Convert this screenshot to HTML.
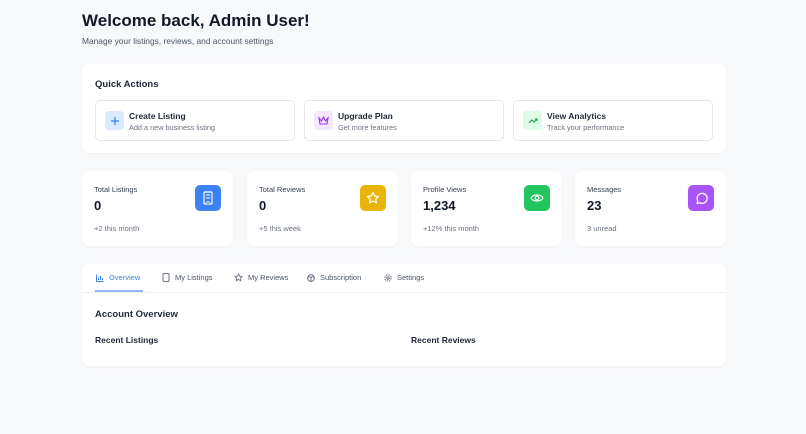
<!DOCTYPE html><html><head><style>
*{box-sizing:border-box;margin:0;padding:0}
body{width:806px;height:434px;background:#f8f9fb;font-family:"Liberation Sans",sans-serif;color:#111827;position:relative;overflow:hidden}
.a{position:absolute}
.card{position:absolute;background:#fff;border-radius:7px;box-shadow:0 1px 2px rgba(0,0,0,.04)}
.qa{position:absolute;top:36px;height:41px;width:200px;border:1px solid #e5e7eb;border-radius:5px;background:#fff}
.qa .ic{position:absolute;left:9px;top:10px;width:19px;height:19px;border-radius:4px;display:flex;align-items:center;justify-content:center}
.qa b{position:absolute;left:33px;top:10px;font-size:8.5px;font-weight:bold;color:#1f2937}
.qa span{position:absolute;left:33px;top:22px;font-size:7.3px;color:#6b7280}
.st{top:171px;width:151px;height:75px}
.st .l{position:absolute;left:12px;top:14px;font-size:7.5px;color:#374151}
.st .v{position:absolute;left:12px;top:27px;font-size:13px;font-weight:bold}
.st .s{position:absolute;left:12px;top:53px;font-size:7.5px;color:#6b7280}
.st .ic{position:absolute;left:113px;top:14px;width:26px;height:26px;border-radius:5px;display:flex;align-items:center;justify-content:center}
.tab{position:absolute;top:9px;font-size:7.5px;color:#4b5563;display:flex;align-items:center;gap:5px}
</style></head><body>
<div class="a" style="left:82px;top:11px;font-size:17px;font-weight:bold">Welcome back, Admin User!</div>
<div class="a" style="left:82px;top:36px;font-size:8.4px;color:#4b5563">Manage your listings, reviews, and account settings</div>
<div class="card" style="left:82px;top:64px;width:644px;height:89px">
<div class="a" style="left:13px;top:15px;font-size:9.5px;font-weight:bold;color:#1f2937">Quick Actions</div>
<div class="qa" style="left:13px"><div class="ic" style="background:#dbeafe"><svg width="10" height="10" viewBox="0 0 10 10"><path d="M5 1v8M1 5h8" stroke="#3b82f6" stroke-width="1.2"/></svg></div><b>Create Listing</b><span>Add a new business listing</span></div>
<div class="qa" style="left:222px"><div class="ic" style="background:#f3e8ff"><svg width="11" height="10" viewBox="0 0 11 10"><path d="M1 2l2.5 3L5.5 1l2 4L10 2 9 8H2z" stroke="#9333ea" fill="none" stroke-width="1.1"/></svg></div><b>Upgrade Plan</b><span>Get more features</span></div>
<div class="qa" style="left:431px"><div class="ic" style="background:#dcfce7"><svg width="10" height="10" viewBox="0 0 10 10"><path d="M1 7l3-3 2 2 3-3M7 3h2v2" stroke="#16a34a" fill="none" stroke-width="1.1"/></svg></div><b>View Analytics</b><span>Track your performance</span></div>
</div>
<div class="card st" style="left:82px"><div class="l">Total Listings</div><div class="v">0</div><div class="s">+2 this month</div><div class="ic" style="background:#3b82f6"><svg width="12" height="14" viewBox="0 0 12 14"><rect x="2" y="1" width="8" height="12" rx="1" stroke="#fff" fill="none" stroke-width="1.2"/><path d="M4 4h4M4 7h4M5 13v-2h2v2" stroke="#fff" stroke-width="1"/></svg></div></div>
<div class="card st" style="left:247px"><div class="l">Total Reviews</div><div class="v">0</div><div class="s">+5 this week</div><div class="ic" style="background:#eab308"><svg width="14" height="14" viewBox="0 0 14 14"><path d="M7 1.5l1.7 3.5 3.8.5-2.8 2.6.7 3.8L7 10.1 3.6 11.9l.7-3.8L1.5 5.5l3.8-.5z" stroke="#fff" fill="none" stroke-width="1.2" stroke-linejoin="round"/></svg></div></div>
<div class="card st" style="left:411px"><div class="l">Profile Views</div><div class="v">1,234</div><div class="s">+12% this month</div><div class="ic" style="background:#22c55e"><svg width="14" height="10" viewBox="0 0 14 10"><path d="M1 5c2-4 10-4 12 0-2 4-10 4-12 0z" stroke="#fff" fill="none" stroke-width="1.2"/><circle cx="7" cy="5" r="1.8" stroke="#fff" fill="none" stroke-width="1.2"/></svg></div></div>
<div class="card st" style="left:575px"><div class="l">Messages</div><div class="v">23</div><div class="s">3 unread</div><div class="ic" style="background:#a855f7"><svg width="13" height="13" viewBox="0 0 13 13"><path d="M2 11.5l.8-2.6A5 5 0 1 1 4.6 10.7z" stroke="#fff" fill="none" stroke-width="1.2" stroke-linejoin="round"/></svg></div></div>
<div class="card" style="left:82px;top:264px;width:644px;height:102px">
<div class="a" style="left:0;top:28px;width:644px;height:1px;background:#eef0f3"></div>
<div class="a" style="left:13px;top:26px;width:48px;height:2px;background:#93b4f5"></div>
<div class="tab" style="left:14px;color:#3b82f6"><svg width="8" height="8" viewBox="0 0 8 8"><path d="M.5.5v7h7M2.5 6V3.5M4.5 6V2M6.5 6V4" stroke="#3b82f6" fill="none"/></svg>Overview</div>
<div class="tab" style="left:80px"><svg width="8" height="9" viewBox="0 0 8 9"><rect x="1" y=".5" width="6" height="8" rx="1" stroke="#6b7280" fill="none"/></svg>My Listings</div>
<div class="tab" style="left:152px"><svg width="9" height="9" viewBox="0 0 14 14"><path d="M7 1.5l1.7 3.5 3.8.5-2.8 2.6.7 3.8L7 10.1 3.6 11.9l.7-3.8L1.5 5.5l3.8-.5z" stroke="#6b7280" fill="none" stroke-width="1.4"/></svg>My Reviews</div>
<div class="tab" style="left:225px"><svg width="8" height="8" viewBox="0 0 8 8"><circle cx="4" cy="4" r="3.4" stroke="#6b7280" fill="none"/><path d="M1 3h6M4 3v4" stroke="#6b7280"/></svg>Subscription</div>
<div class="tab" style="left:302px"><svg width="8" height="8" viewBox="0 0 8 8"><circle cx="4" cy="4" r="3.2" stroke="#6b7280" fill="none" stroke-dasharray="1.5 1"/><circle cx="4" cy="4" r="1.2" stroke="#6b7280" fill="none"/></svg>Settings</div>
<div class="a" style="left:13px;top:45px;font-size:9.5px;font-weight:bold;color:#1f2937">Account Overview</div>
<div class="a" style="left:13px;top:71px;font-size:8.5px;font-weight:bold;color:#1f2937">Recent Listings</div>
<div class="a" style="left:329px;top:71px;font-size:8.5px;font-weight:bold;color:#1f2937">Recent Reviews</div>
</div>
</body></html>
